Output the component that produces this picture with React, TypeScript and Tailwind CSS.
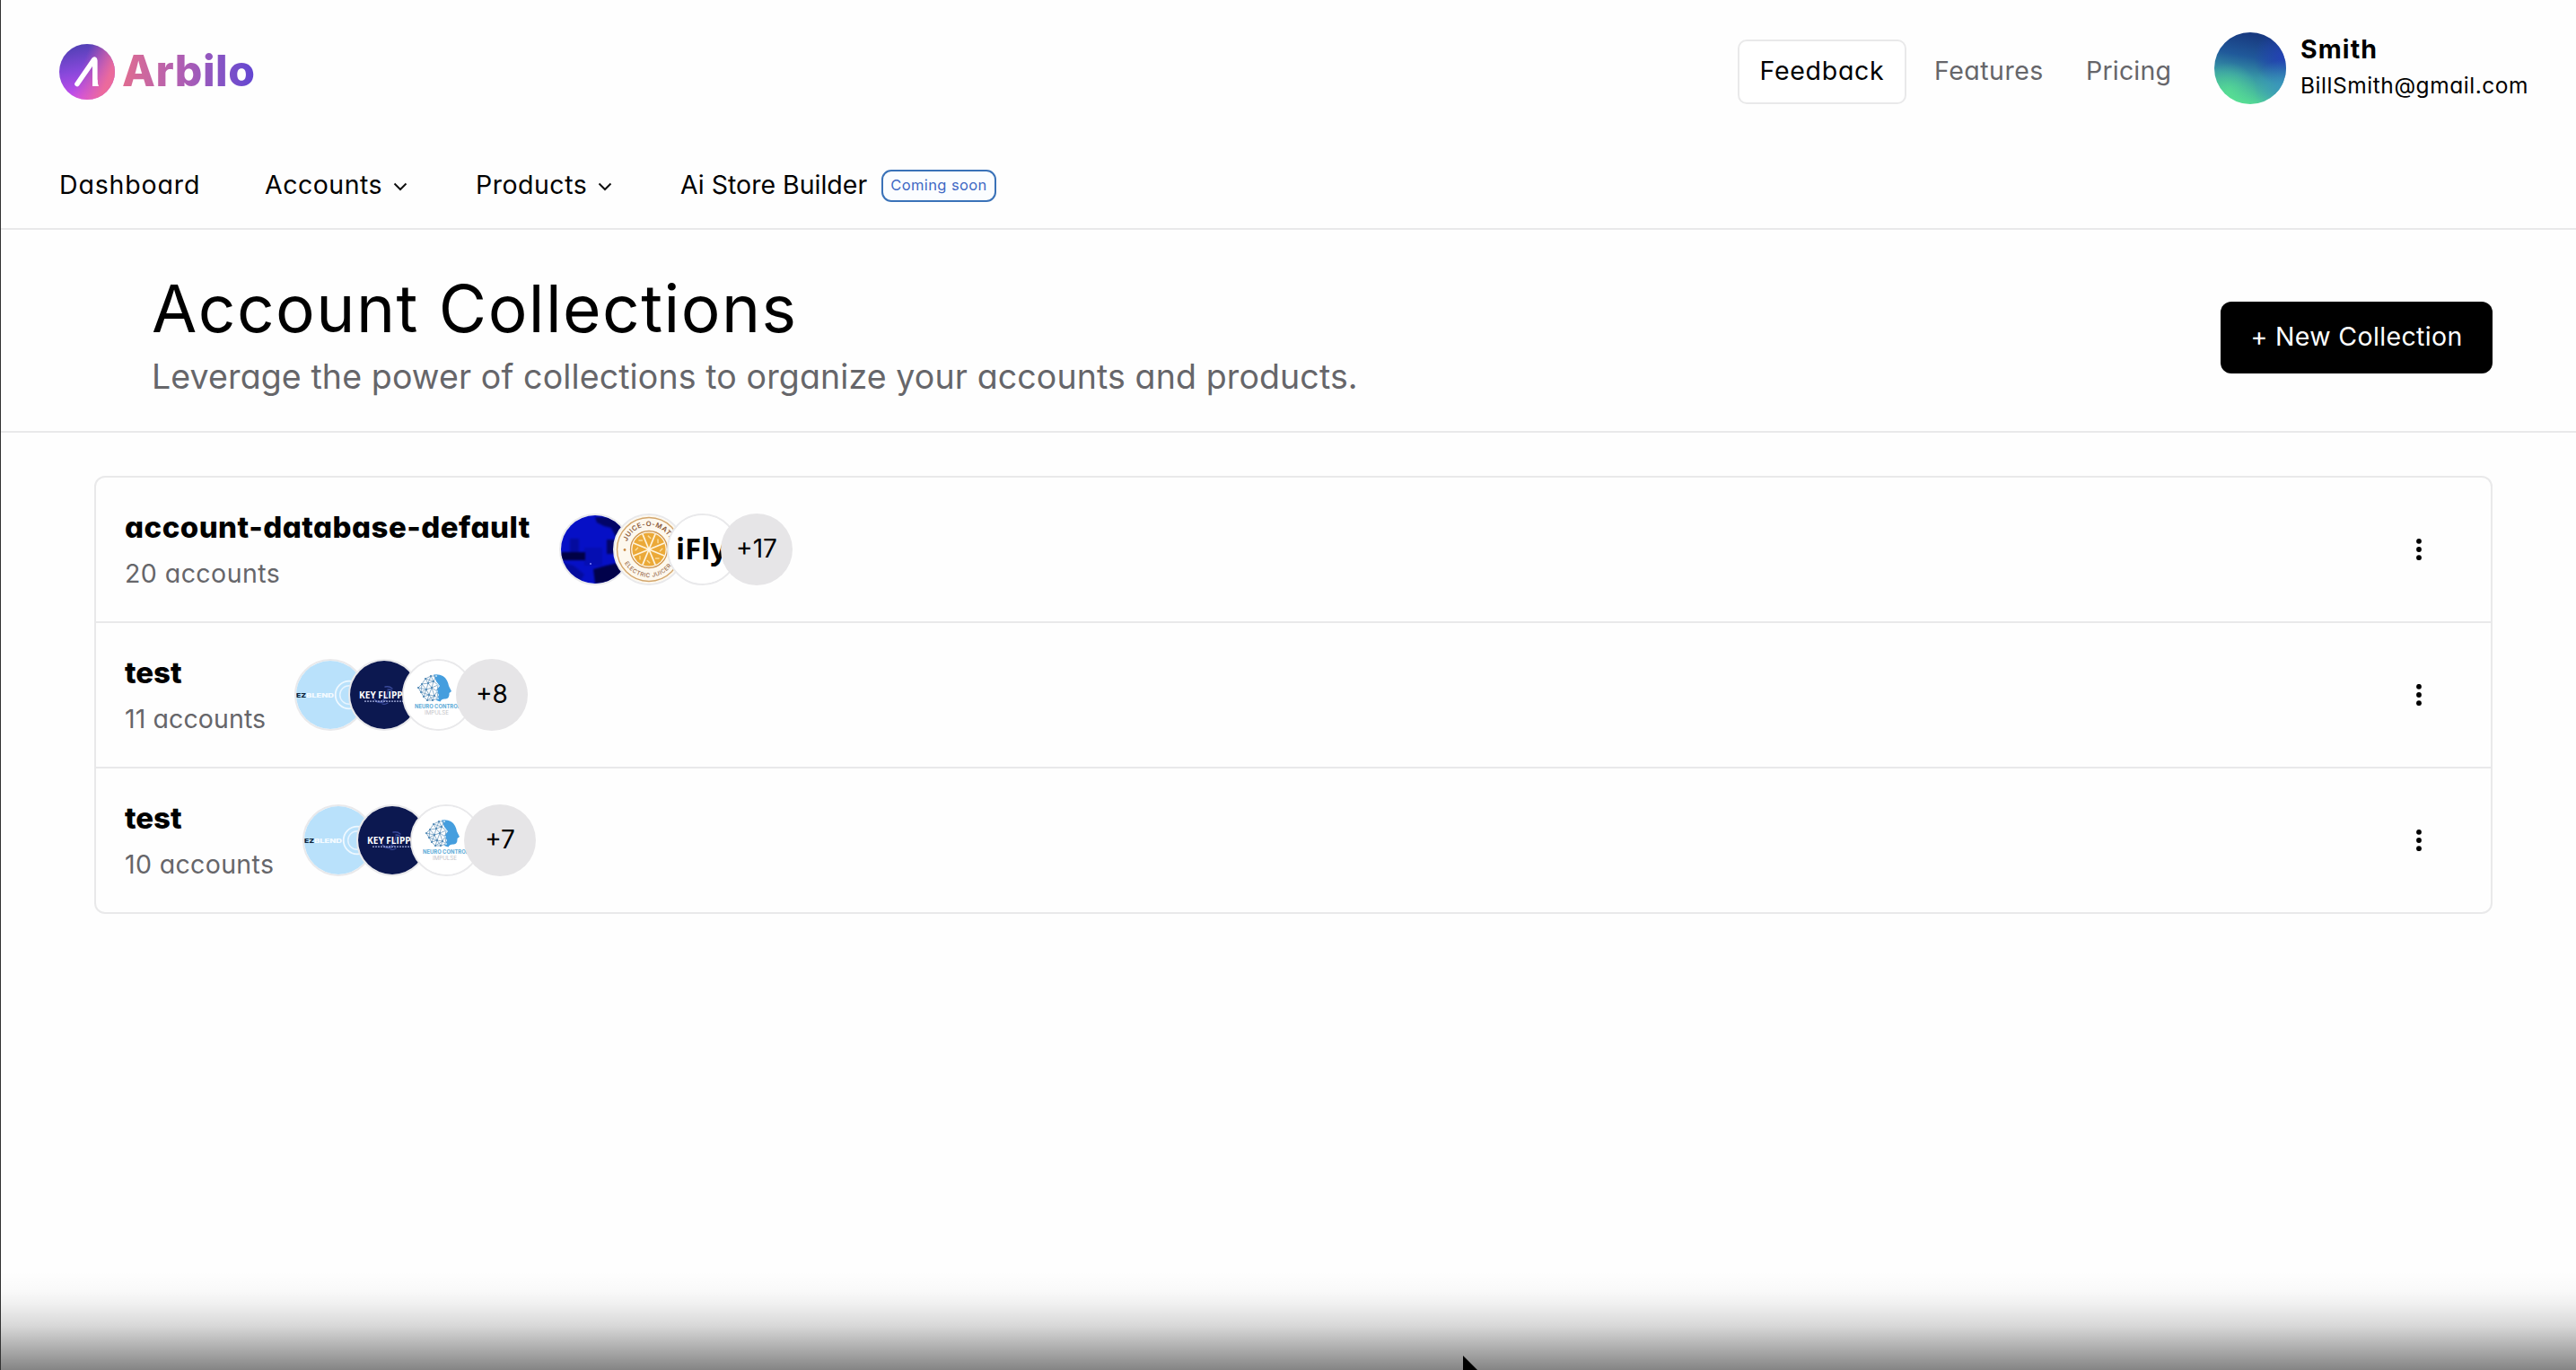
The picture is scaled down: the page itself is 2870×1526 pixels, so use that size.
import type { ReactNode } from "react";

function LogoMark() {
  return (
    <svg className="h-[62px] w-[62px]" viewBox="0 0 62 62">
      <defs>
        <linearGradient id="markBase" x1="0.35" y1="0" x2="0.55" y2="1">
          <stop offset="0" stopColor="#5040b4" />
          <stop offset="0.45" stopColor="#8648da" />
          <stop offset="1" stopColor="#d54ef0" />
        </linearGradient>
        <linearGradient id="markPink" x1="0.35" y1="0.35" x2="1" y2="0.6">
          <stop offset="0.1" stopColor="#e8669f" stopOpacity="0" />
          <stop offset="0.85" stopColor="#ee6c98" stopOpacity="0.95" />
        </linearGradient>
      </defs>
      <circle cx="31" cy="31" r="31" fill="url(#markBase)" />
      <circle cx="31" cy="31" r="31" fill="url(#markPink)" />
      <path d="M20 44.5 L38.6 17.6 Q39.6 16.4 39.8 18.5 V42.5" fill="none" stroke="#fff" strokeWidth="5.6" strokeLinecap="round" strokeLinejoin="round" />
      <path d="M37 36 V47 H44 Q42.6 44.5 42.6 40 Z" fill="#fff" />
    </svg>
  );
}

function Chevron() {
  return (
    <svg className="mt-[3px] h-[10px] w-[16px]" viewBox="0 0 16 10" fill="none" stroke="#111" strokeWidth="2">
      <path d="M1.5 1.5 L8 8 L14.5 1.5" />
    </svg>
  );
}

function UserAvatar() {
  return (
    <svg className="h-20 w-20" viewBox="0 0 80 80">
      <defs>
        <linearGradient id="userBase" x1="0.6" y1="0" x2="0.4" y2="1">
          <stop offset="0.05" stopColor="#183a80" />
          <stop offset="0.35" stopColor="#20599a" />
          <stop offset="0.62" stopColor="#3898a6" />
          <stop offset="1" stopColor="#56dd94" />
        </linearGradient>
        <radialGradient id="userBlue" cx="0.95" cy="0.35" r="0.4">
          <stop offset="0" stopColor="#2440b8" stopOpacity="0.9" />
          <stop offset="1" stopColor="#2440b8" stopOpacity="0" />
        </radialGradient>
        <radialGradient id="userCyan" cx="0.95" cy="0.78" r="0.4">
          <stop offset="0" stopColor="#3a96c0" stopOpacity="0.9" />
          <stop offset="1" stopColor="#3a96c0" stopOpacity="0" />
        </radialGradient>
        <radialGradient id="userGreen" cx="0.2" cy="0.82" r="0.4">
          <stop offset="0" stopColor="#5ce890" stopOpacity="0.6" />
          <stop offset="1" stopColor="#5ce890" stopOpacity="0" />
        </radialGradient>
      </defs>
      <circle cx="40" cy="40" r="40" fill="url(#userBase)" />
      <circle cx="40" cy="40" r="40" fill="url(#userBlue)" />
      <circle cx="40" cy="40" r="40" fill="url(#userCyan)" />
      <circle cx="40" cy="40" r="40" fill="url(#userGreen)" />
    </svg>
  );
}

function BlueArt() {
  return (
    <svg className="h-full w-full" viewBox="0 0 76 76">
      <defs>
        <filter id="soft" x="-20%" y="-20%" width="140%" height="140%">
          <feGaussianBlur stdDeviation="1.3" />
        </filter>
      </defs>
      <rect width="76" height="76" fill="#0610c6" />
      <g fill="#03053f" filter="url(#soft)">
        <rect x="0" y="41" width="27" height="9" opacity="0.95" />
        <rect x="10" y="26" width="10" height="18" opacity="0.3" />
        <path d="M38 2 H70 V26 H62 L56 14 L48 12 L40 8 Z" opacity="0.7" />
        <rect x="51" y="27" width="9" height="16" opacity="0.7" />
        <path d="M36 60 L50 56 L76 50 V76 H38 Z" opacity="0.9" />
        <path d="M0 52 L14 56 L26 66 L20 76 H0 Z" opacity="0.3" />
        <rect x="26" y="36" width="20" height="20" opacity="0.15" />
      </g>
      <circle cx="33" cy="54" r="0.9" fill="#8f93ff" />
    </svg>
  );
}

const seeds = [22.5, 67.5, 112.5, 157.5, 202.5, 247.5, 292.5, 337.5];

function JuiceArt() {
  return (
    <svg className="h-full w-full" viewBox="0 0 76 76">
      <defs>
        <path id="juiceTop" d="M12 38 A26 26 0 0 1 64 38" />
        <path id="juiceBottom" d="M7 38 A31 31 0 0 0 69 38" />
      </defs>
      <rect width="76" height="76" fill="#fdf8ee" />
      <circle cx="38" cy="38" r="35.5" fill="none" stroke="#d3a66c" strokeWidth="1.4" />
      <circle cx="38" cy="38" r="20.5" fill="#fffaf0" stroke="#cf9650" strokeWidth="1.3" />
      <circle cx="38" cy="38" r="18.6" fill="#eba938" />
      {seeds.map((a) => (
        <g key={a} transform={`rotate(${a} 38 38)`}>
          <path d="M38 38 V19.5" stroke="#fff4dc" strokeWidth="1.7" />
          <path d="M43 24 l1.4 3.2" stroke="#fbdc9c" strokeWidth="1.5" strokeLinecap="round" />
        </g>
      ))}
      <circle cx="38" cy="38" r="1.8" fill="#fff8e8" />
      <circle cx="11" cy="38.5" r="1.4" fill="#c98a45" />
      <text fontSize="7.6" fontWeight="600" fill="#8c5a3a" letterSpacing="0.4">
        <textPath href="#juiceTop" startOffset="11%">JUICE-O-MATIC</textPath>
      </text>
      <text fontSize="6.4" fontWeight="500" fill="#9a6c4c" letterSpacing="0.5">
        <textPath href="#juiceBottom" startOffset="16%">ELECTRIC JUICER</textPath>
      </text>
    </svg>
  );
}

function IFlyArt() {
  return (
    <div className="flex h-full w-full items-center overflow-hidden bg-white pl-[8px] font-['Open_Sans','Noto_Sans',sans-serif] text-[33px] leading-[36px] font-bold text-black">
      <span className="-mt-[3px] shrink-0">iFly</span>
    </div>
  );
}

function EzBlendArt() {
  return (
    <svg className="h-full w-full" viewBox="0 0 76 76">
      <rect width="76" height="76" fill="#b9e1fb" />
      <text x="0" y="40.5" fontSize="5.8" fontWeight="900" fill="#10263c" textLength="11" lengthAdjust="spacingAndGlyphs">EZ</text>
      <text x="11" y="40.5" fontSize="5.8" fontWeight="900" fill="#f2faff" textLength="31" lengthAdjust="spacingAndGlyphs">BLEND</text>
      <circle cx="59" cy="38" r="15.3" fill="none" stroke="#eef8ff" strokeWidth="1.8" />
      <circle cx="59" cy="38" r="10.3" fill="none" stroke="#e6f4ff" strokeWidth="1.5" />
    </svg>
  );
}

function KeyFlipperArt() {
  return (
    <svg className="h-full w-full" viewBox="0 0 76 76">
      <rect width="76" height="76" fill="#0c1850" />
      <g fill="none" stroke="#4a5bb4" strokeWidth="1.3" strokeLinecap="round" opacity="0.75">
        <path d="M39 29 q5 -1 8 2" />
        <path d="M42 32 q6 0 5 4" />
        <path d="M27 43 q4 4 8 2 q6 -3 7 -11" />
        <path d="M30 46 q6 2 10 -2" />
        <path d="M36 48 q3 1 6 -1" />
      </g>
      <text x="10" y="41.5" fontSize="9.8" fontWeight="700" fill="#fff" textLength="61" lengthAdjust="spacingAndGlyphs" fontFamily="Open Sans">KEY FLIPPER</text>
      <path d="M16 45.2 H62" stroke="#a9b2e0" strokeWidth="1.2" strokeDasharray="2 1" />
    </svg>
  );
}

const nodes: [number, number][] = [
  [24, 20], [30, 17], [36, 17], [20, 26], [27, 25], [33, 23], [38, 27], [16, 30], [19, 35], [25, 32], [31, 30],
  [37, 34], [22, 40], [28, 38], [34, 39], [26, 44], [32, 44], [38, 42],
];

const links = nodes.flatMap((a, i) =>
  nodes.slice(i + 1).filter((b) => Math.hypot(a[0] - b[0], a[1] - b[1]) < 9.5).map((b) => [a, b]),
);

function NeuroArt() {
  return (
    <svg className="h-full w-full" viewBox="0 0 76 76">
      <rect width="76" height="76" fill="#fff" />
      <path d="M33 15.5 Q44 14 48 22 Q49.5 25 50 28 L53 34 L50.5 36 Q51 42 46.5 42.5 Q42 42 40.5 45.5 L36 44 L39 38 L36 33 L40 28 L36 23 Z" fill="#459ede" />
      {links.map(([a, b], i) => (
        <line key={i} x1={a[0]} y1={a[1]} x2={b[0]} y2={b[1]} stroke="#6f9cc0" strokeWidth="0.8" />
      ))}
      {nodes.map(([x, y], i) => (
        <circle key={i} cx={x} cy={y} r="1.1" fill={x > 35 ? "#bfe2f8" : "#4d86b4"} />
      ))}
      <text x="12" y="52.5" fontSize="6" fontWeight="700" fill="#5cabd8" textLength="51" lengthAdjust="spacingAndGlyphs">NEURO CONTROL</text>
      <text x="23" y="60" fontSize="6" fill="#c4c4c8" textLength="27" lengthAdjust="spacingAndGlyphs">IMPULSE</text>
    </svg>
  );
}

function Bubble({ children }: { children: ReactNode }) {
  return (
    <div className="h-20 w-20 shrink-0 overflow-hidden rounded-full border-2 border-[#e9e9eb] bg-white">{children}</div>
  );
}

function Dots() {
  return (
    <svg className="h-[24px] w-[6px]" viewBox="0 0 6 24" fill="#000">
      <circle cx="3" cy="2.8" r="2.9" />
      <circle cx="3" cy="12" r="2.9" />
      <circle cx="3" cy="21.2" r="2.9" />
    </svg>
  );
}

type RowProps = { name: ReactNode; count: ReactNode; textWidth: string; art: ReactNode[]; more: string };

function Row({ name, count, textWidth, art, more }: RowProps) {
  return (
    <li className="flex h-[162px] items-center pr-[77px] pl-8 last:h-[160px]">
      <div className={`flex shrink-0 flex-col pt-1 ${textWidth}`}>
        <h2 className="h-[50px] text-[33px] leading-[51px] font-extrabold whitespace-nowrap text-black">{name}</h2>
        <p className="h-[54px] leading-[54px] whitespace-nowrap text-[#66666a]">{count}</p>
      </div>
      <div className="flex -space-x-5">
        {art.map((a, i) => (
          <Bubble key={i}>{a}</Bubble>
        ))}
        <div className="flex h-20 w-20 shrink-0 items-center justify-center rounded-full bg-[#e6e5e7] pb-[2px] text-[28px] text-black">
          {more}
        </div>
      </div>
      <button className="ml-auto">
        <Dots />
      </button>
    </li>
  );
}

const sharedArt = [<EzBlendArt key="ez" />, <KeyFlipperArt key="key" />, <NeuroArt key="neuro" />];

export default function App() {
  return (
    <div className="relative h-[1526px] w-full overflow-hidden border-l border-[#333] bg-[#fefefe] font-['Inter','Open_Sans',sans-serif] text-[28.5px] text-black [font-feature-settings:'cv11']">
      <header className="h-[256px] border-b-2 border-[#e9e9ea] pl-[65px]">
        <div className="flex h-[160px] items-center">
          <LogoMark />
          <span className="-mt-[2px] ml-[8px] bg-gradient-to-r from-[#e06c90] via-[#a95cb6] to-[#6245d2] bg-clip-text text-[48px] leading-[58px] font-extrabold tracking-[0.5px] text-transparent">
            Arbilo
          </span>
          <div className="ml-auto flex w-[934px] items-center">
            <a className="flex h-[72px] w-[188px] items-center justify-center rounded-[10px] border-2 border-[#e9e9ea] bg-white pb-[2px] tracking-[0.7px]">Feedback</a>
            <a className="ml-[31px] w-[169px] pb-[2px] tracking-[0.5px] text-[#66666a]">Features</a>
            <a className="w-[143px] pb-[2px] tracking-[0.2px] text-[#66666a]">Pricing</a>
            <div className="-mt-2 flex items-center">
              <UserAvatar />
              <div className="ml-[16px] flex flex-col">
                <span className="h-[40px] leading-[38px] font-bold tracking-[1.1px]">Smith</span>
                <span className="h-[40px] text-[24.5px] leading-[39px] tracking-[0.55px]">BillSmith@gmail.com</span>
              </div>
            </div>
          </div>
        </div>
        <nav className="flex h-[93px] items-center">
          <a className="w-[229px] tracking-[0.85px]">Dashboard</a>
          <a className="flex w-[235px] items-center tracking-[0.5px]">
            <span className="w-[143px]">Accounts</span>
            <Chevron />
          </a>
          <a className="flex w-[228px] items-center tracking-[0.5px]">
            <span className="w-[136px]">Products</span>
            <Chevron />
          </a>
          <a className="w-[224px] tracking-[0px]">Ai Store Builder</a>
          <span className="mt-[1px] flex h-9 w-[128px] items-center justify-center rounded-[11px] border-2 border-[#3a72b8] bg-[#fbfdff] pb-px text-[16.5px] tracking-[0.4px] text-[#3f69c4]">
            Coming soon
          </span>
        </nav>
      </header>

      <section className="flex h-[226px] items-start justify-between border-b-2 border-[#e9e9ea] pr-[93px] pl-[168px]">
        <div className="pt-[44px]">
          <h1 className="text-[73px] leading-[88px] tracking-[1.45px]">Account Collections</h1>
          <p className="text-[37.5px] leading-[63px] tracking-[0.12px] text-[#66666a]">
            Leverage the power of collections to organize your accounts and products.
          </p>
        </div>
        <button className="mt-20 flex h-20 w-[303px] items-center justify-center rounded-[12px] bg-black pb-[2px] tracking-[0.35px] text-white">
          + New Collection
        </button>
      </section>

      <main className="pt-12 pr-[93px] pl-[104px]">
        <ul className="divide-y-2 divide-[#e9e9ea] rounded-[12px] border-2 border-[#e9e9ea]">
          <Row
            name={<span className="tracking-[0.48px]">account-database-default</span>}
            count={<span className="tracking-[0.45px]">20 accounts</span>}
            textWidth="w-[484px]"
            art={[<BlueArt key="blue" />, <JuiceArt key="juice" />, <IFlyArt key="ifly" />]}
            more="+17"
          />
          <Row
            name={<span className="tracking-[0px]">test</span>}
            count={<span className="tracking-[0.1px]">11 accounts</span>}
            textWidth="w-[189px]"
            art={sharedArt}
            more="+8"
          />
          <Row
            name={<span className="tracking-[0px]">test</span>}
            count={<span className="tracking-[0.35px]">10 accounts</span>}
            textWidth="w-[198px]"
            art={sharedArt}
            more="+7"
          />
        </ul>
      </main>

      <div className="pointer-events-none absolute inset-x-0 bottom-0 h-[110px] bg-[linear-gradient(to_bottom,rgba(0,0,0,0)_0%,rgba(0,0,0,0.02)_20%,rgba(0,0,0,0.06)_34%,rgba(0,0,0,0.15)_55%,rgba(0,0,0,0.26)_70%,rgba(0,0,0,0.37)_85%,rgba(0,0,0,0.48)_100%)]" />
      <svg className="pointer-events-none absolute bottom-0 left-[1628px] h-[17px] w-[20px]" viewBox="0 0 20 17">
        <path d="M1 1 V17 H17 Z" fill="#000" />
      </svg>
    </div>
  );
}
